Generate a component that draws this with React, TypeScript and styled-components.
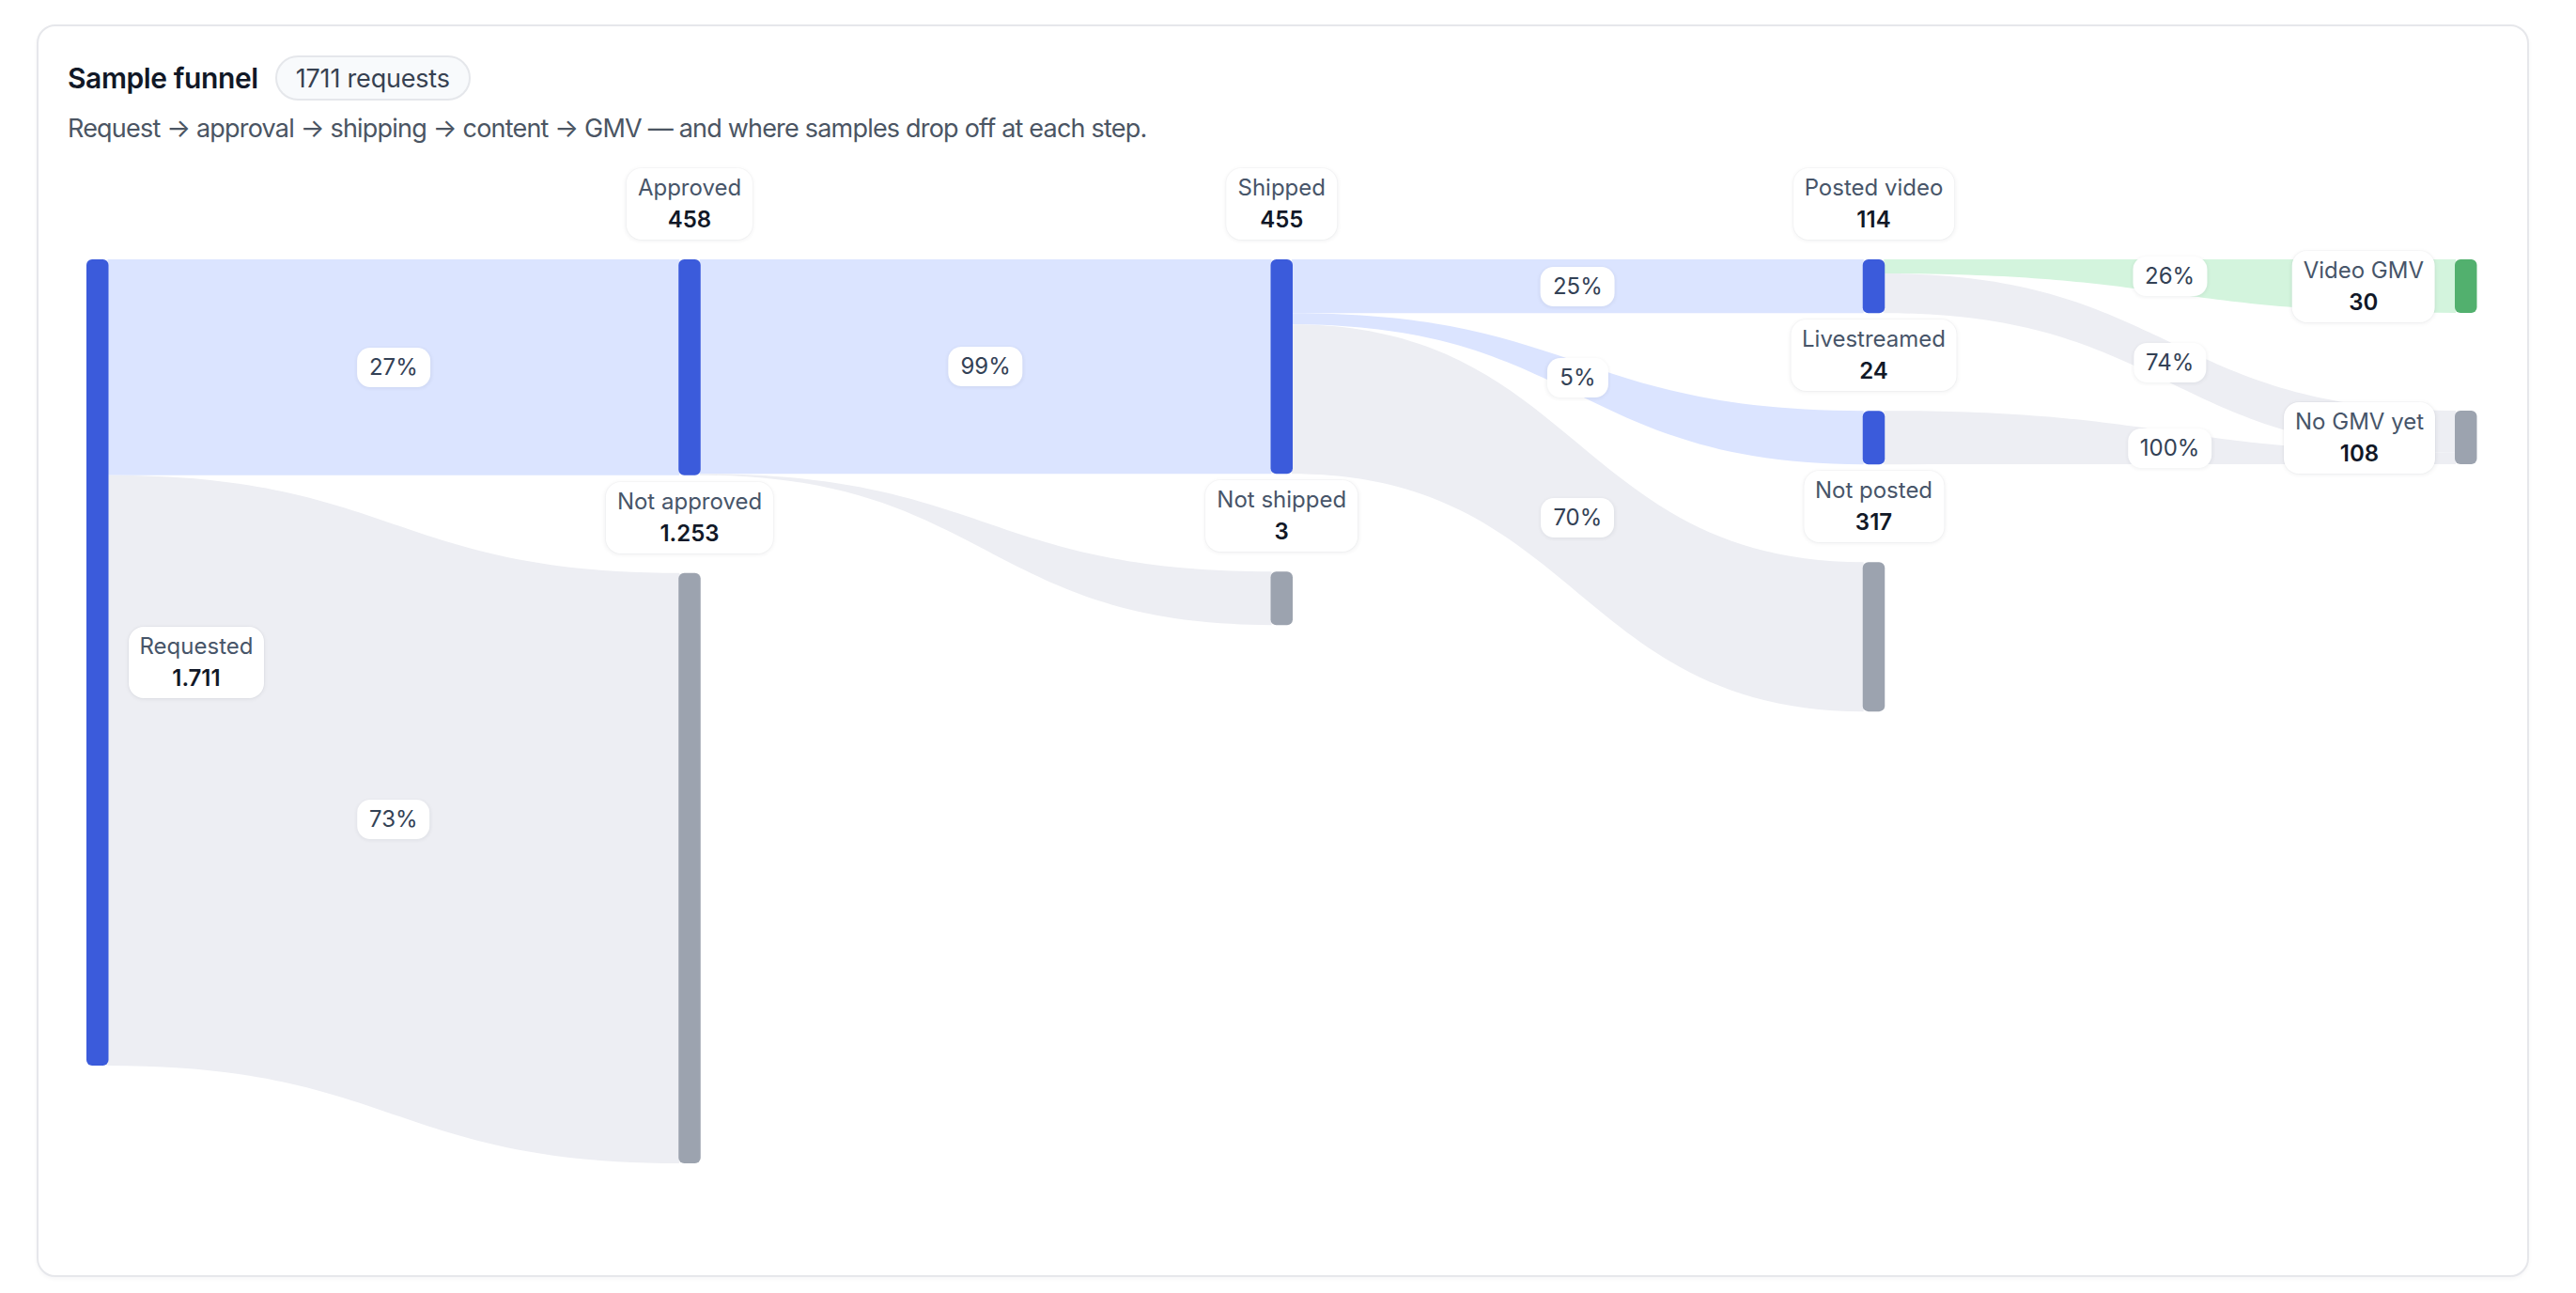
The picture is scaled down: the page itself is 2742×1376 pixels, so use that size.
import styled, { createGlobalStyle } from "styled-components";

const GlobalStyle = createGlobalStyle`
  html, body {
    margin: 0;
    background: #ffffff;
  }
  body {
    font-family: Inter, "Noto Sans", "Liberation Sans", sans-serif;
    color: #111827;
  }
`;

type Kind = "flow" | "drop" | "win";

interface FunnelNode {
  id: string;
  name: string;
  value: number;
  col: number;
  kind: Kind;
}

const nodes: FunnelNode[] = [
  { id: "req", name: "Requested", value: 1711, col: 0, kind: "flow" },
  { id: "app", name: "Approved", value: 458, col: 1, kind: "flow" },
  { id: "napp", name: "Not approved", value: 1253, col: 1, kind: "drop" },
  { id: "ship", name: "Shipped", value: 455, col: 2, kind: "flow" },
  { id: "nship", name: "Not shipped", value: 3, col: 2, kind: "drop" },
  { id: "vid", name: "Posted video", value: 114, col: 3, kind: "flow" },
  { id: "live", name: "Livestreamed", value: 24, col: 3, kind: "flow" },
  { id: "npost", name: "Not posted", value: 317, col: 3, kind: "drop" },
  { id: "gmv", name: "Video GMV", value: 30, col: 4, kind: "win" },
  { id: "nogmv", name: "No GMV yet", value: 108, col: 4, kind: "drop" },
];

const links: [string, string, number][] = [
  ["req", "app", 458],
  ["req", "napp", 1253],
  ["app", "ship", 455],
  ["app", "nship", 3],
  ["ship", "vid", 114],
  ["ship", "live", 24],
  ["ship", "npost", 317],
  ["vid", "gmv", 30],
  ["vid", "nogmv", 84],
  ["live", "nogmv", 24],
];

const nodeFill: Record<Kind, string> = {
  flow: "#3b5bdb",
  drop: "#9ca3af",
  win: "#52b06e",
};

const linkFill: Record<Kind, string> = {
  flow: "#dbe4ff",
  drop: "#edeef3",
  win: "#d3f4dd",
};

// chart geometry (px inside the chart box)
const CHART_H = 1169;
const TOP = 119;
const SCALE = 858 / 1711;
const GAP = 104;
const MIN_H = 57;
const X0 = 20;
const STEP = 630.25;
const NODE_W = 23.5;
const LABEL_GAP = 21;

const fmt = (n: number) => String(n).replace(/\B(?=(\d{3})+(?!\d))/g, ".");

type Placed = FunnelNode & { x0: number; x1: number; y0: number; y1: number };

function layout() {
  const placed: Record<string, Placed> = {};
  const colY: number[] = [];
  nodes.forEach((n) => {
    const y0 = colY[n.col] ?? TOP;
    const h = Math.max(n.value * SCALE, MIN_H);
    const x0 = X0 + n.col * STEP;
    placed[n.id] = { ...n, x0, x1: x0 + NODE_W, y0, y1: y0 + h };
    colY[n.col] = y0 + h + GAP;
  });

  const incoming: Record<string, number> = {};
  links.forEach(([, t, v]) => (incoming[t] = (incoming[t] ?? 0) + v));

  const outY: Record<string, number> = {};
  const inY: Record<string, number> = {};
  const bands = links.map(([s, t, v]) => {
    const src = placed[s];
    const tgt = placed[t];
    const sh = (v / src.value) * (src.y1 - src.y0);
    const th = (v / incoming[t]) * (tgt.y1 - tgt.y0);
    const s0 = outY[s] ?? src.y0;
    const t0 = inY[t] ?? tgt.y0;
    outY[s] = s0 + sh;
    inY[t] = t0 + th;
    const sx = src.x1;
    const tx = tgt.x0;
    const mx = (sx + tx) / 2;
    const s1 = s0 + sh;
    const t1 = t0 + th;
    const d = `M${sx - 1},${s0} C${mx},${s0} ${mx},${t0} ${tx + 1},${t0} L${tx + 1},${t1} C${mx},${t1} ${mx},${s1} ${sx - 1},${s1} Z`;
    return {
      key: `${s}-${t}`,
      d,
      fill: linkFill[tgt.kind],
      share: v / src.value,
      cx: mx,
      cy: ((s0 + s1) / 2 + (t0 + t1) / 2) / 2,
    };
  });

  return { placed: Object.values(placed), bands };
}

const Page = styled.div`
  padding: 26px 50px 17px 39px;
`;

const Card = styled.section`
  border: 2px solid #e6e7eb;
  border-radius: 20px;
  padding: 31px;
  background: #ffffff;
  box-shadow: 0 2px 4px rgba(15, 23, 42, 0.04);
`;

const Header = styled.div`
  display: flex;
  align-items: center;
  gap: 18px;
  height: 48px;
`;

const Title = styled.h2`
  margin: 0;
  font-size: 30px;
  font-weight: 600;
  letter-spacing: -0.4px;
  color: #111827;
`;

const Badge = styled.span`
  display: inline-flex;
  align-items: center;
  height: 44px;
  padding: 0 20px;
  border: 2px solid #e5e7eb;
  border-radius: 999px;
  background: #f8fafc;
  font-size: 27px;
  letter-spacing: -0.2px;
  color: #374151;
`;

const Subtitle = styled.p`
  margin: 10px 0 0;
  font-size: 27px;
  line-height: 40px;
  letter-spacing: -0.8px;
  color: #4b5563;
`;

const Chart = styled.div`
  position: relative;
  height: ${CHART_H}px;
`;

const Canvas = styled.svg`
  display: block;
  width: 100%;
  height: 100%;
`;

const anchors = {
  above: "translate(-50%, -100%)",
  right: "translate(0, -50%)",
  left: "translate(-100%, -50%)",
};

const NodeLabel = styled.div<{ $anchor: keyof typeof anchors }>`
  position: absolute;
  transform: ${(p) => anchors[p.$anchor]};
  padding: 4px 12px;
  border-radius: 16px;
  background: #ffffff;
  box-shadow: 0 1px 5px rgba(15, 23, 42, 0.07), 0 0 0 1px rgba(15, 23, 42, 0.02);
  text-align: center;
  white-space: nowrap;
  font-size: 24px;
  line-height: 34px;
`;

const LabelName = styled.div`
  color: #475569;
`;

const LabelValue = styled.div`
  color: #111827;
  font-weight: 600;
`;

const Share = styled.div`
  position: absolute;
  transform: translate(-50%, -50%);
  height: 42px;
  padding: 0 13px;
  border-radius: 14px;
  background: #ffffff;
  box-shadow: 0 1px 4px rgba(15, 23, 42, 0.07);
  font-size: 24px;
  line-height: 42px;
  color: #334155;
  white-space: nowrap;
`;

const SampleFunnel = () => {
  const { placed, bands } = layout();

  return (
    <Card>
      <Header>
        <Title>Sample funnel</Title>
        <Badge>1711 requests</Badge>
      </Header>
      <Subtitle>Request → approval → shipping → content → GMV — and where samples drop off at each step.</Subtitle>
      <Chart>
        <Canvas>
          {bands.map((b) => (
            <path key={b.key} d={b.d} fill={b.fill} />
          ))}
          {placed.map((n) => (
            <rect
              key={n.id}
              x={n.x0}
              y={n.y0}
              width={NODE_W}
              height={n.y1 - n.y0}
              rx={6}
              fill={nodeFill[n.kind]}
            />
          ))}
        </Canvas>
        {bands
          .filter((b) => b.share >= 0.02)
          .map((b) => (
            <Share key={b.key} style={{ left: b.cx, top: b.cy }}>
              {Math.round(b.share * 100)}%
            </Share>
          ))}
        {placed.map((n) => {
          const anchor = n.col === 0 ? "right" : n.col === 4 ? "left" : "above";
          const pos =
            anchor === "right"
              ? { left: n.x1 + LABEL_GAP, top: (n.y0 + n.y1) / 2 }
              : anchor === "left"
              ? { left: n.x0 - LABEL_GAP, top: (n.y0 + n.y1) / 2 }
              : { left: (n.x0 + n.x1) / 2, top: n.y0 - LABEL_GAP };
          return (
            <NodeLabel key={n.id} $anchor={anchor} style={pos}>
              <LabelName>{n.name}</LabelName>
              <LabelValue>{fmt(n.value)}</LabelValue>
            </NodeLabel>
          );
        })}
      </Chart>
    </Card>
  );
};

export default function App() {
  return (
    <>
      <GlobalStyle />
      <Page>
        <SampleFunnel />
      </Page>
    </>
  );
}
